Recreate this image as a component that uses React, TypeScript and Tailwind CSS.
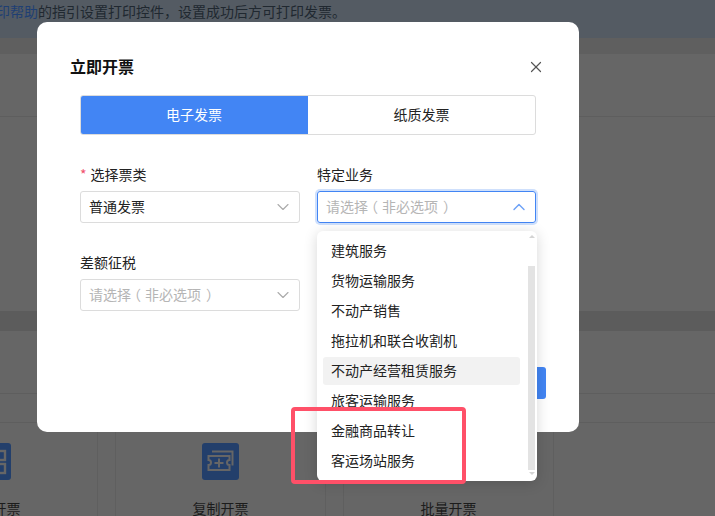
import { ChevronDown, ChevronUp, X } from "lucide-react";

const options = [
  "建筑服务",
  "货物运输服务",
  "不动产销售",
  "拖拉机和联合收割机",
  "不动产经营租赁服务",
  "旅客运输服务",
  "金融商品转让",
  "客运场站服务",
];

function ScanIcon() {
  return (
    <svg viewBox="0 0 37 37" className="h-[37px] w-[37px]" fill="none" stroke="#666666" strokeWidth="2.4">
      <rect x="8" y="8" width="9" height="9" />
      <rect x="22" y="8" width="9" height="9" />
      <rect x="8" y="21" width="9" height="9" />
      <rect x="22" y="21" width="9" height="9" />
    </svg>
  );
}

function CopyIcon() {
  return (
    <svg viewBox="0 0 37 37" className="h-[37px] w-[37px]" fill="none" stroke="#666666" strokeWidth="2">
      <path d="M10 8.5h20.5v14" />
      <path d="M6.5 13h21v4a2.5 2.5 0 0 0 0 5v5h-21v-5a2.5 2.5 0 0 0 0-5z" />
      <path d="M17 15.5v9M12.5 20h9" />
    </svg>
  );
}

function ActionCard({ title, icon }: { title: string; icon: React.ReactNode }) {
  return (
    <div className="flex flex-col items-center border-r border-l border-[#5f5f5f] pt-5">
      <div className="flex h-[37px] w-[37px] items-center justify-center rounded-[3px] bg-[#233f6b]">{icon}</div>
      <div className="mt-[18px] text-sm leading-5 text-[#1c1c1c]">{title}</div>
    </div>
  );
}

function Placeholder() {
  return (
    <span className="pb-0.5 text-[#b5b5b5]">
      请选择<span className="inline-block -translate-x-1">（</span>非必选项<span className="inline-block translate-x-[5px]">）</span>
    </span>
  );
}

export default function App() {
  return (
    <div
      className="relative h-[516px] w-[715px] overflow-hidden bg-[#666666]"
      style={{ fontFamily: '"Noto Sans CJK SC", "Noto Sans", sans-serif' }}
    >
      {/* page behind the mask */}
      <div className="-ml-1 h-[38px] w-[719px] bg-[#545b63] pt-px text-sm leading-5 whitespace-nowrap text-[#202830]">
        <span className="text-[#1f3f73]">印帮助</span>的指引设置打印控件，设置成功后方可打印发票。
      </div>
      <div className="h-4 bg-[#5f5f5f]" />
      <div className="h-[63px] border-b border-[#5e5e5e]" />
      <div className="h-[194px]" />
      <div className="h-5 bg-[#5c5c5c]" />
      <div className="h-[63px] border-b border-[#5e5e5e]" />
      <div className="h-[29px] border-b border-[#5e5e5e]" />
      <div className="-ml-[113px] grid w-[667px] grid-cols-[211px_211px_211px] gap-[17px]">
        <ActionCard title="扫码开票" icon={<ScanIcon />} />
        <ActionCard title="复制开票" icon={<CopyIcon />} />
        <ActionCard title="批量开票" icon={<CopyIcon />} />
      </div>

      {/* dialog */}
      <div className="absolute top-[22px] left-[37px] h-[410px] w-[542px] rounded-[10px] bg-white">
        <div className="mt-[33px] flex h-6 items-center justify-between pr-[34px] pl-[33px]">
          <h2 className="pb-0.5 text-base leading-6 font-bold text-[#111111]">立即开票</h2>
          <X size={18} strokeWidth={1.6} className="text-[#555555]" />
        </div>

        <div className="px-[43px]">
          <div className="mt-4 grid h-10 grid-cols-2 overflow-hidden rounded-[3px] border border-[#dcdcdc] text-sm text-[#222222]">
            <div className="-my-px -ml-px flex items-center justify-center rounded-l-[3px] bg-[#4285f4] pb-0.5 text-white">电子发票</div>
            <div className="flex items-center justify-center pb-0.5">纸质发票</div>
          </div>

          <div className="mt-[30px] grid grid-cols-[220px_219px] gap-x-[17px] text-sm text-[#222222]">
            <div>
              <label className="flex h-5 items-center pb-0.5">
                <span className="mr-1 text-[#f0506e]">*</span>选择票类
              </label>
              <div className="mt-1.5 flex h-8 items-center justify-between rounded-[3px] border border-[#dcdcdc] pr-1.5 pl-2">
                <span className="pb-0.5">普通发票</span>
                <ChevronDown size={20} strokeWidth={1.3} className="text-[#aaaaaa]" />
              </div>
            </div>
            <div>
              <label className="flex h-5 items-center pb-0.5">特定业务</label>
              <div className="relative mt-1.5">
                <div className="flex h-8 items-center justify-between rounded-[3px] border border-[#4285f4] pr-1.5 pl-2 shadow-[0_0_0_2px_#cfe0fc]">
                  <Placeholder />
                  <ChevronUp size={20} strokeWidth={1.7} className="text-[#6ea2f7]" />
                </div>

                <div className="absolute top-10 left-0 z-10 h-[250px] w-[220px] rounded-md bg-white py-[5px] shadow-[0_2px_14px_rgba(0,0,0,0.16)]">
                  {options.map((option) => (
                    <div key={option} className="flex h-[30px] items-center">
                      <div
                        className={
                          option === "不动产经营租赁服务"
                            ? "mx-1.5 flex h-7 w-[197px] items-center rounded-[3px] bg-[#f2f2f2] px-2 pb-0.5"
                            : "mx-1.5 flex h-7 w-[197px] items-center px-2 pb-0.5"
                        }
                      >
                        {option}
                      </div>
                    </div>
                  ))}
                  <div className="absolute top-[4px] right-[2px] flex h-[240px] w-[7px] flex-col items-center">
                    <div className="h-0 w-0 border-x-[3px] border-b-[3px] border-x-transparent border-b-[#d4d4d4]" />
                    <div className="mt-[28px] h-[204px] w-[7px] bg-[#e3e3e3]" />
                    <div className="mt-[2px] h-0 w-0 border-x-[3px] border-t-[3px] border-x-transparent border-t-[#d4d4d4]" />
                  </div>
                </div>
              </div>
            </div>
            <div className="mt-[30px]">
              <label className="flex h-5 items-center pb-0.5">差额征税</label>
              <div className="mt-1.5 flex h-8 items-center justify-between rounded-[3px] border border-[#dcdcdc] pr-1.5 pl-2">
                <Placeholder />
                <ChevronDown size={20} strokeWidth={1.3} className="text-[#aaaaaa]" />
              </div>
            </div>
          </div>
        </div>

        <div className="mt-14 flex justify-end pr-[33px]">
          <div className="h-8 w-20 rounded-[3px] bg-[#4285f4]" />
        </div>
      </div>

      {/* red annotation drawn on the screenshot */}
      <div className="absolute top-[407px] left-[291px] z-20 h-[77px] w-[175px] rounded-[4px] border-[4px] border-[#ff5068]" />
    </div>
  );
}
